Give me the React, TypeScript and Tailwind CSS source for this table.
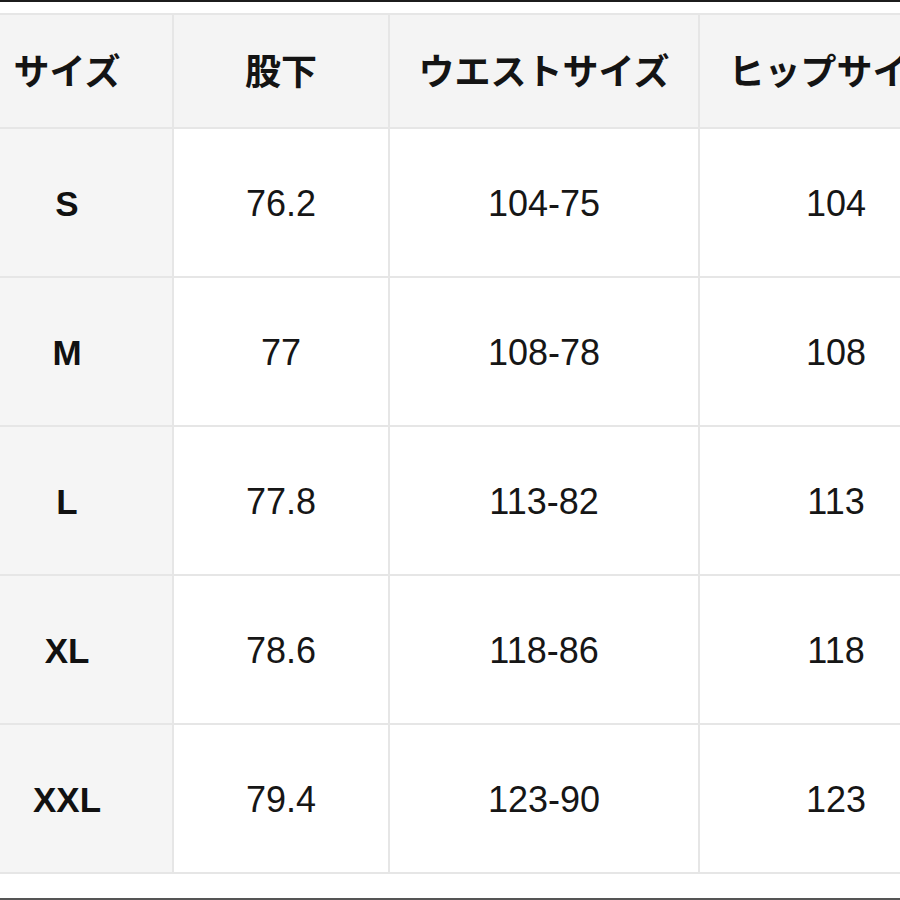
import React from "react";

const rows = [
  ["S", "76.2", "104-75", "104"],
  ["M", "77", "108-78", "108"],
  ["L", "77.8", "113-82", "113"],
  ["XL", "78.6", "118-86", "118"],
  ["XXL", "79.4", "123-90", "123"],
];

const headers = ["サイズ", "股下", "ウエストサイズ", "ヒップサイズ"];

export default function App() {
  return (
    <div className="w-[900px] h-[900px] overflow-hidden bg-white flex flex-col">
      <div className="h-[2px] bg-[#1c1c1c] shrink-0" />
      <div className="h-[11px] shrink-0" />
      <div className="ml-[-38px] w-[1010px] grid grid-cols-[210px_214px_308px_272px] grid-rows-[112px_repeat(5,147px)] gap-[2px] py-[2px] bg-[#e6e6e6] shrink-0">
        {headers.map((h) => (
          <div
            key={h}
            className="bg-[#f4f4f4] flex items-center justify-center pb-[4px] text-[36px] font-bold text-[#141414] whitespace-nowrap"
            style={{ fontFamily: '"Noto Sans CJK JP", "Noto Sans", sans-serif' }}
          >
            {h}
          </div>
        ))}
        {rows.map((r) =>
          r.map((c, i) => (
            <div
              key={r[0] + i}
              className={
                i === 0
                  ? "bg-[#f5f5f5] flex items-center justify-center pt-[3px] text-[35px] font-bold text-[#111] font-['Liberation_Sans',Arial,sans-serif]"
                  : "bg-white flex items-center justify-center pt-[3px] text-[36px] text-[#161616] font-['Liberation_Sans',Arial,sans-serif]"
              }
            >
              {c}
            </div>
          ))
        )}
      </div>
      <div className="h-[24px] shrink-0" />
      <div className="h-[2px] bg-[#555] shrink-0" />
    </div>
  );
}
